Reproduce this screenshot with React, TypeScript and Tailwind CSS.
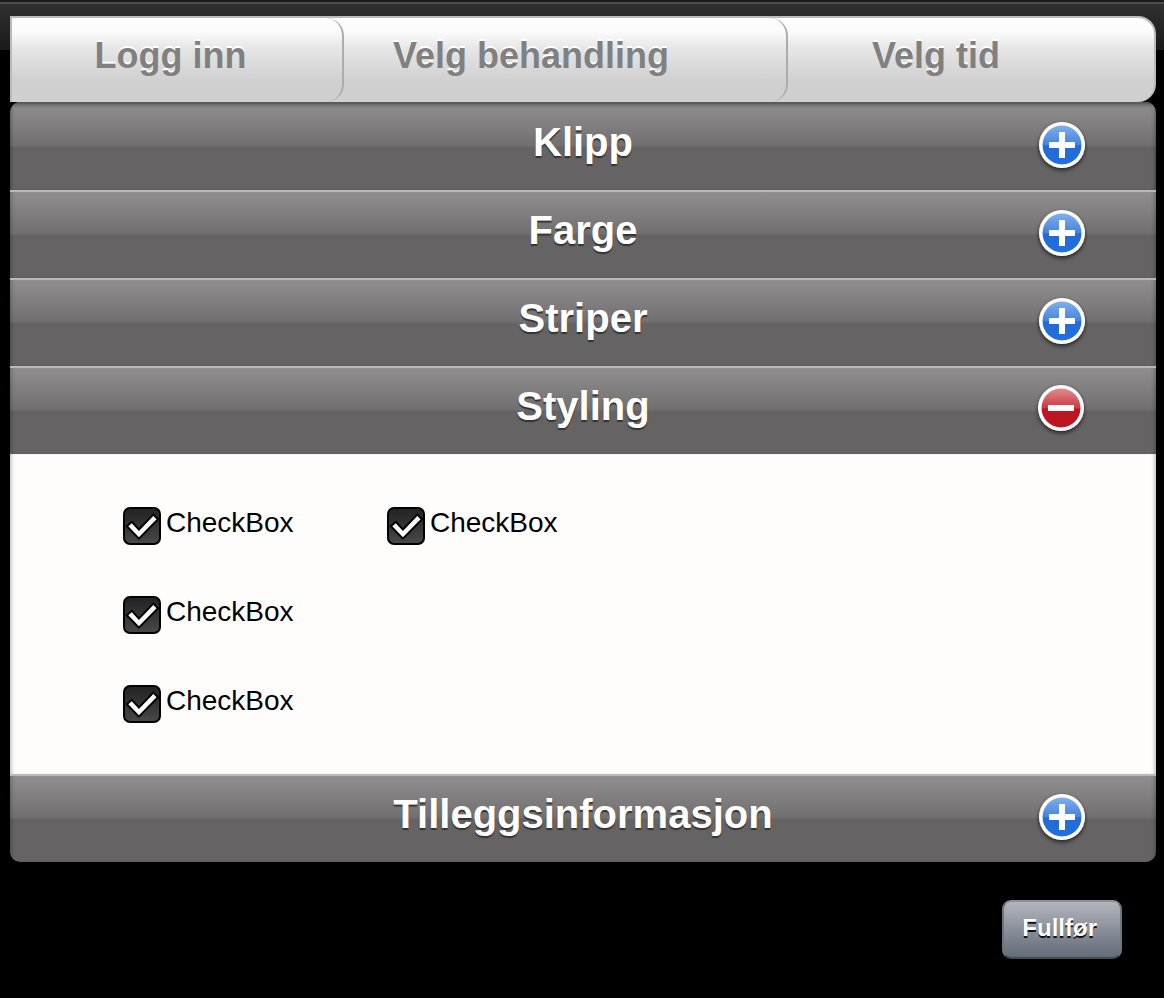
import React, { useState } from "react";

const TABS = [
  { label: "Logg inn", className: "pr-[13px]", divider: true },
  { label: "Velg behandling", className: "pr-[68px]", divider: true },
  { label: "Velg tid", className: "pr-[70px]", divider: false },
];

const SECTIONS = ["Klipp", "Farge", "Striper", "Styling", "Tilleggsinformasjon"];

function ToggleIcon({ open }: { open: boolean }) {
  const id = open ? "icon-minus" : "icon-plus";
  const cx = open ? 23 : 24;
  const cy = open ? 30 : 31;
  return (
    <svg
      aria-hidden="true"
      viewBox="0 0 48 56"
      className="mr-[70px] h-[56px] w-[48px] justify-self-end overflow-visible"
    >
      <defs>
        <linearGradient id={id} x1="0" y1="0" x2="0" y2="1">
          <stop offset="0" stopColor={open ? "#e08a8e" : "#82aeea"} />
          <stop offset="0.5" stopColor={open ? "#cb3a43" : "#4482dc"} />
          <stop offset="0.52" stopColor={open ? "#bd1522" : "#226bd8"} />
          <stop offset="1" stopColor={open ? "#bd1522" : "#2270de"} />
        </linearGradient>
        <filter id={id + "-shadow"} x="-30%" y="-30%" width="160%" height="170%">
          <feDropShadow dx="0" dy="2" stdDeviation="2" floodColor="#000" floodOpacity="0.7" />
        </filter>
      </defs>
      <circle cx={cx} cy={cy} r="23" fill="#fff" filter={"url(#" + id + "-shadow)"} />
      <circle cx={cx} cy={cy} r="19.5" fill={"url(#" + id + ")"} />
      <rect x={cx - 13} y={cy - 3} width="26" height="6" fill="#fff" />
      {!open && <rect x={cx - 3} y={cy - 13} width="6" height="26" fill="#fff" />}
    </svg>
  );
}

function CheckItem() {
  return (
    <label className="flex h-[38px] cursor-pointer items-center gap-[5px]">
      <span className="grid size-[38px] shrink-0">
        <input
          type="checkbox"
          defaultChecked
          className="peer col-start-1 row-start-1 size-[38px] appearance-none rounded-[7px] border-2 border-black bg-linear-to-b from-[#232323] to-[#484848]"
        />
        <svg
          aria-hidden="true"
          viewBox="0 0 38 38"
          className="pointer-events-none invisible z-10 col-start-1 row-start-1 size-[38px] peer-checked:visible"
        >
          <path
            d="M5.3 19.3 8.8 16.2 15.9 24 30.3 9 33.6 12.3 15.9 30.2Z"
            fill="#fff"
            stroke="#000"
            strokeWidth="4"
            paintOrder="stroke"
          />
        </svg>
      </span>
      <span className="pb-[6px] text-[28px] leading-[32px] text-black">CheckBox</span>
    </label>
  );
}

function StylingOptions() {
  return (
    <div className="grid grid-cols-[repeat(auto-fill,264px)] content-start gap-y-[51px] pt-[53px] pb-[51px] pl-[113px]">
      <CheckItem />
      <CheckItem />
      <div className="col-start-1">
        <CheckItem />
      </div>
      <div className="col-start-1">
        <CheckItem />
      </div>
    </div>
  );
}

export default function App() {
  const [openSection, setOpenSection] = useState<string | null>("Styling");

  return (
    <div className="min-h-screen bg-black bg-[linear-gradient(to_bottom,#1a1a1a_0,#1a1a1a_2px,#4c4c4c_2px,#4c4c4c_4px,#303030_4px,#1a1a1a_50px)] bg-[length:100%_50px] bg-no-repeat pt-4 pr-2 pb-10 pl-[10px] font-['Liberation_Sans',Arial,sans-serif]">
      <nav className="grid h-[86px] grid-cols-[332fr_444fr_366fr] overflow-hidden rounded-r-[18px] border-2 border-b-0 border-[#bababa] bg-[linear-gradient(to_bottom,#fdfdfd_0%,#fbfbfb_16%,#e6e6e6_36%,#d0d0d0_74%,#cfcfcf_100%)]">
        {TABS.map((tab) => (
          <a
            key={tab.label}
            href="#"
            className={
              "flex items-center justify-center pb-2 text-[36px] leading-[42px] font-bold whitespace-nowrap text-[#808080] [text-shadow:0_-2px_0_#fff] " +
              tab.className +
              (tab.divider ? " rounded-r-[18px] border-r-2 border-[#acacac]" : "")
            }
          >
            {tab.label}
          </a>
        ))}
      </nav>

      <main className="overflow-hidden rounded-[10px]">
        {SECTIONS.map((name, index) => {
          const open = name === openSection;
          return (
            <section key={name}>
              <h2>
                <button
                  type="button"
                  aria-expanded={open}
                  onClick={() => setOpenSection(open ? null : name)}
                  className={
                    "grid h-[88px] w-full cursor-pointer grid-cols-[1fr_auto_1fr] items-center bg-[linear-gradient(to_bottom,#918f90_0%,#726f70_50%,#666364_51%,#666364_100%)] pb-2 " +
                    (index === 0
                      ? "shadow-[inset_0_2px_0_#5c5a5b,inset_0_5px_4px_-2px_rgba(0,0,0,0.4),inset_4px_0_4px_-3px_rgba(0,0,0,0.3),inset_-4px_0_4px_-3px_rgba(0,0,0,0.3)]"
                      : "shadow-[inset_0_2px_0_#bab9b9,inset_4px_0_4px_-3px_rgba(0,0,0,0.3),inset_-4px_0_4px_-3px_rgba(0,0,0,0.3)]")
                  }
                >
                  <span className="col-start-2 text-[40px] leading-[46px] font-bold text-white [text-shadow:0_2px_1px_#333]">
                    {name}
                  </span>
                  <ToggleIcon open={open} />
                </button>
              </h2>
              {open && (
                <div className="min-h-[320px] bg-[#fefdfc] shadow-[inset_4px_0_4px_-3px_rgba(0,0,0,0.3),inset_-4px_0_4px_-3px_rgba(0,0,0,0.3)]">
                  {name === "Styling" && <StylingOptions />}
                </div>
              )}
            </section>
          );
        })}
      </main>

      <div className="flex justify-end pt-[38px] pr-[34px]">
        <button
          type="button"
          className="h-[59px] cursor-pointer rounded-[9px] border-2 border-t-[#8f9094] border-r-[#70757d] border-b-[#434a54] border-l-[#70757d] bg-linear-to-b from-[#b2b5bd] to-[#646c78] pr-[23px] pb-[3px] pl-[18px] text-[24px] leading-[28px] font-bold text-white [text-shadow:0_2px_0_#111]"
        >
          Fullfør
        </button>
      </div>
    </div>
  );
}
